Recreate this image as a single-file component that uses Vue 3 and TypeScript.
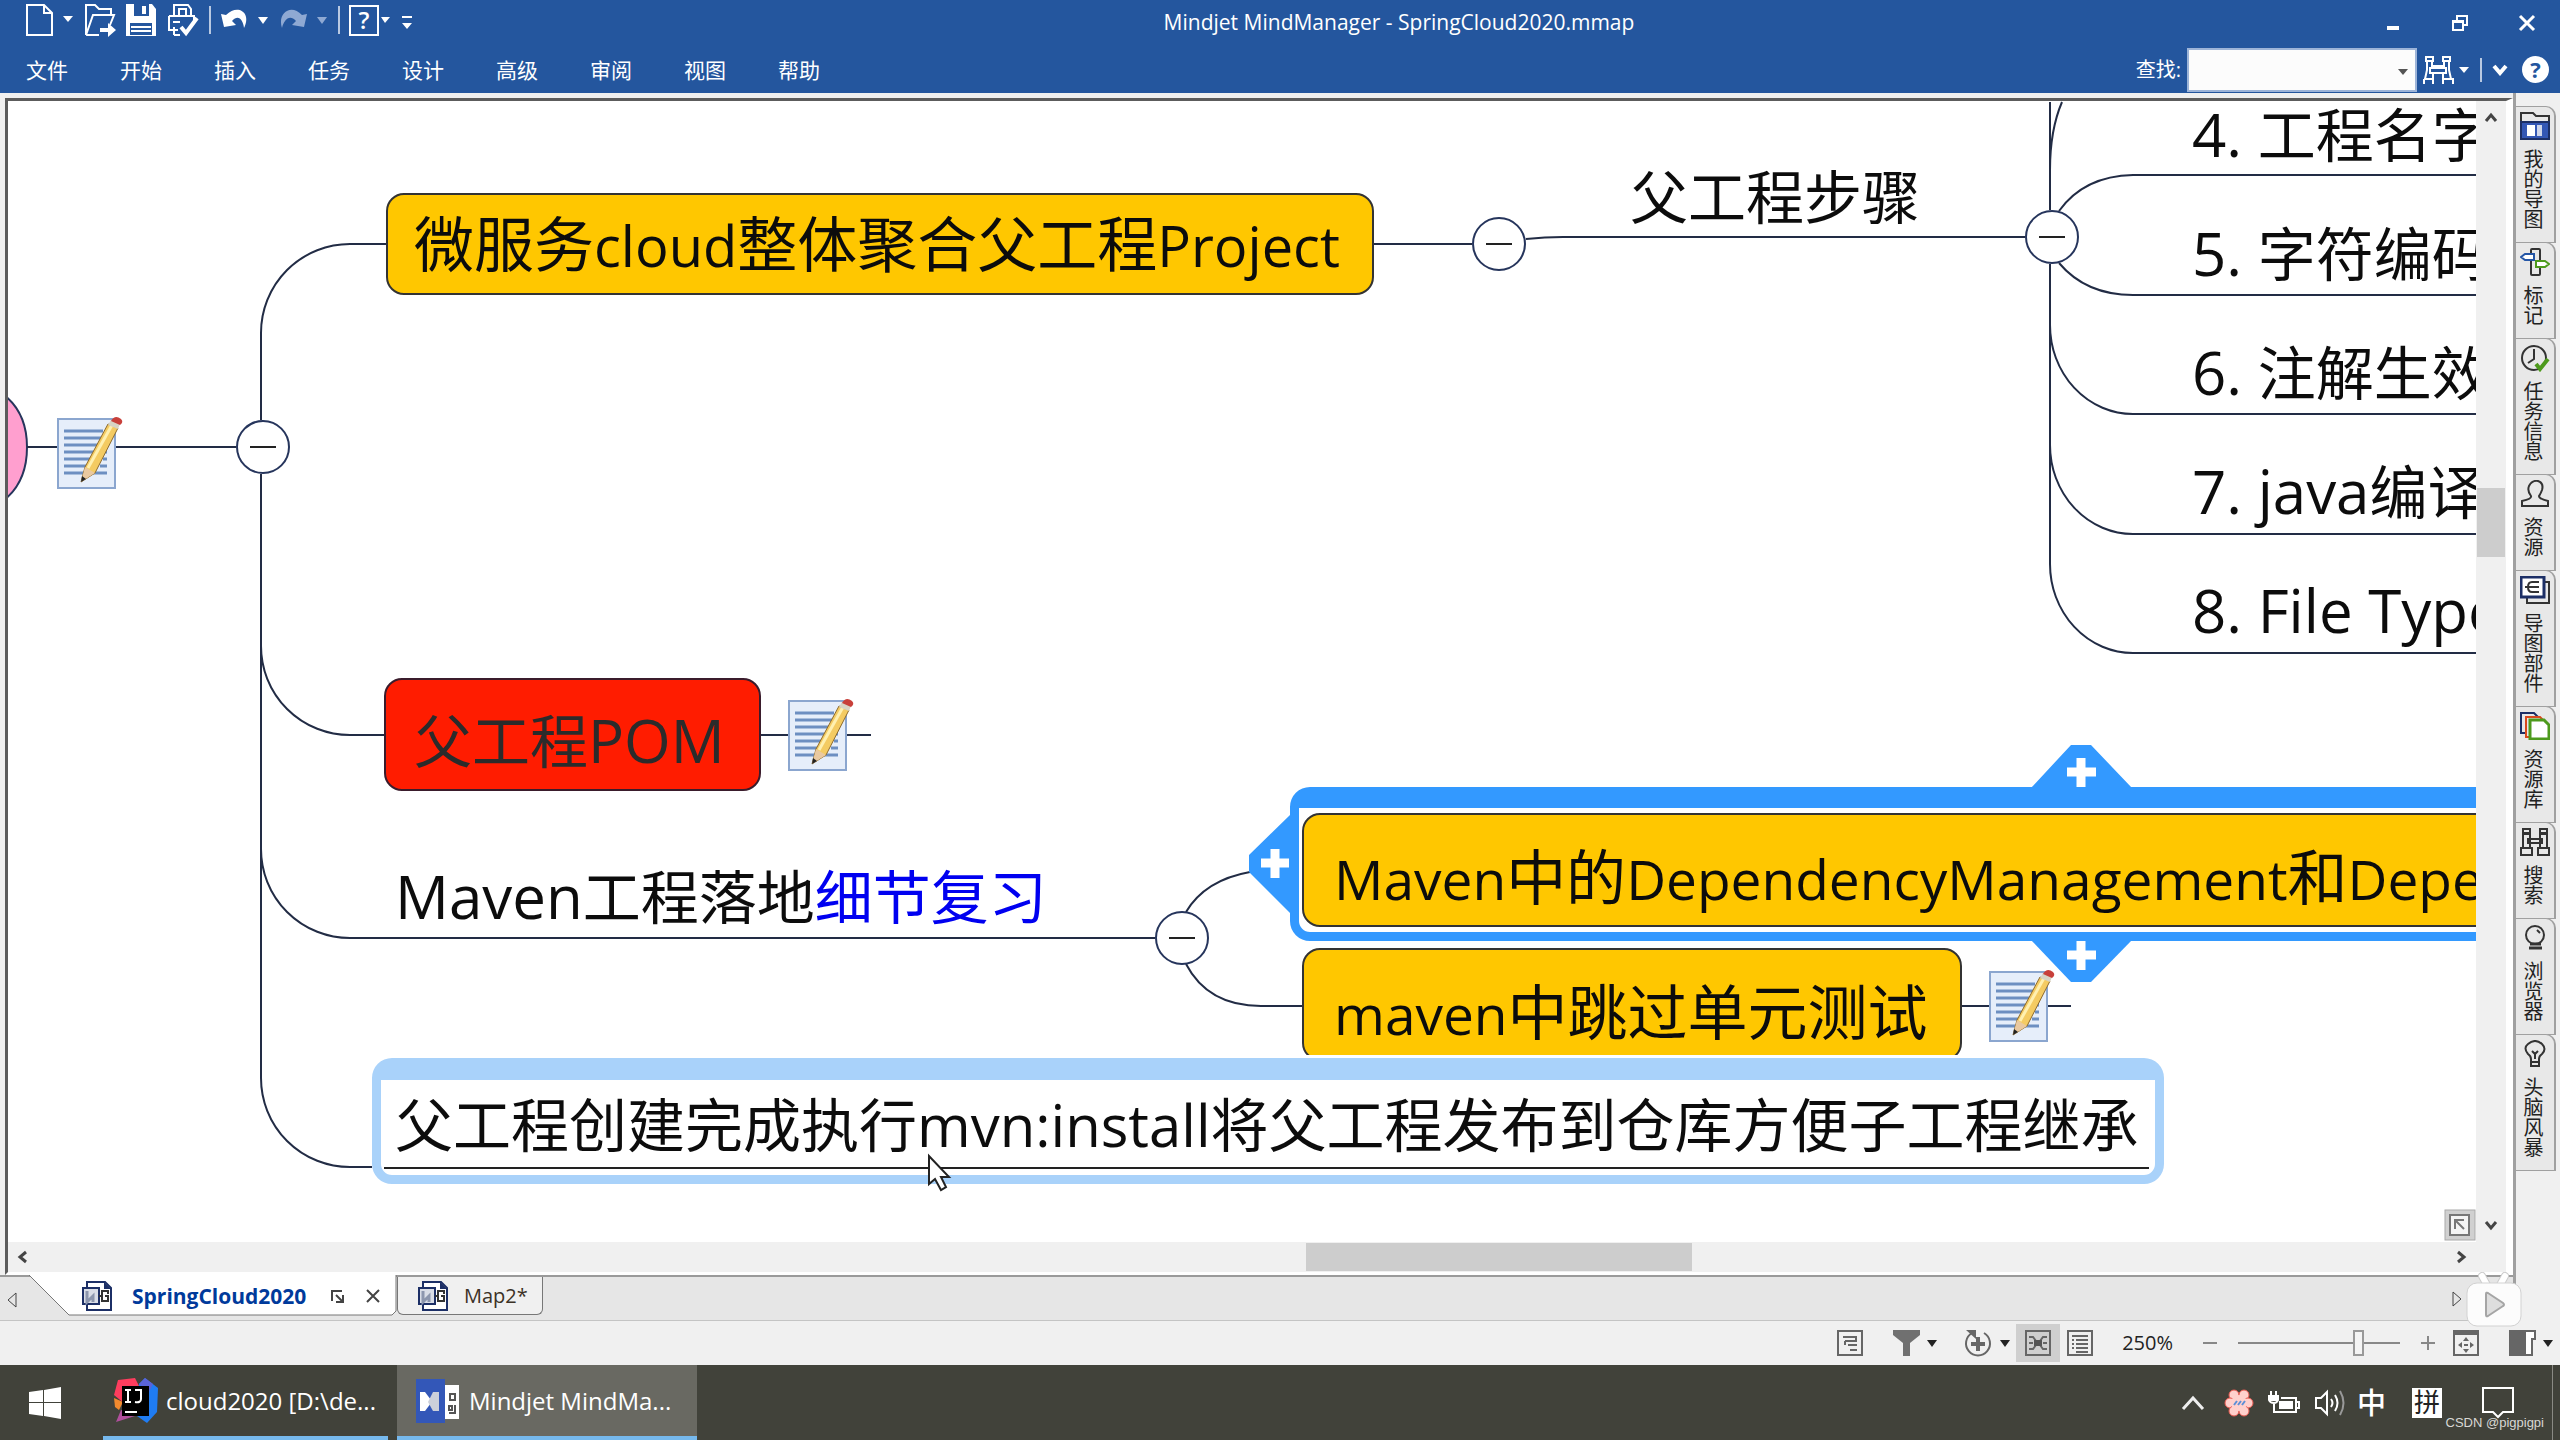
<script setup lang="ts">
import { ref } from 'vue'

interface Run { text: string; kind: 'cjk' | 'latin' | 'mark' }
interface Topic { id: string; tone: string; x: number; y: number; w?: number; h?: number; runs: Run[] }

const menus: string[] = ['文件', '开始', '插入', '任务', '设计', '高级', '审阅', '视图', '帮助']

const sideTabs: { name: string; icon: string }[] = [
  { name: '我的导图', icon: 'maps' },
  { name: '标记', icon: 'marker' },
  { name: '任务信息', icon: 'task' },
  { name: '资源', icon: 'person' },
  { name: '导图部件', icon: 'parts' },
  { name: '资源库', icon: 'library' },
  { name: '搜索', icon: 'search' },
  { name: '浏览器', icon: 'browser' },
  { name: '头脑风暴', icon: 'bulb' },
]

const c = (text: string): Run => ({ text, kind: 'cjk' })
const l = (text: string): Run => ({ text, kind: 'latin' })

const topics: Topic[] = [
  { id: 'project', tone: 'gold', x: 386, y: 193, w: 988, h: 102, runs: [c('微服务'), l('cloud'), c('整体聚合父工程'), l('Project')] },
  { id: 'pom', tone: 'red', x: 384, y: 678, w: 377, h: 113, runs: [c('父工程'), l('POM')] },
  { id: 'detail', tone: 'plain', x: 395, y: 856, runs: [l('Maven'), c('工程落地'), { text: '细节复习', kind: 'mark' }] },
  { id: 'depend', tone: 'gold', x: 1302, y: 813, w: 1400, h: 114, runs: [l('Maven'), c('中的'), l('DependencyManagement'), c('和'), l('Depen')] },
  { id: 'skip', tone: 'gold', x: 1302, y: 948, w: 660, h: 113, runs: [l('maven'), c('中跳过单元测试')] },
  { id: 'steps', tone: 'plain', x: 1630, y: 157, runs: [c('父工程步骤')] },
  { id: 's4', tone: 'plain', x: 2192, y: 94, runs: [l('4. '), c('工程名字')] },
  { id: 's5', tone: 'plain', x: 2192, y: 213, runs: [l('5. '), c('字符编码')] },
  { id: 's6', tone: 'plain', x: 2192, y: 332, runs: [l('6. '), c('注解生效')] },
  { id: 's7', tone: 'plain', x: 2192, y: 451, runs: [l('7. java'), c('编译')] },
  { id: 's8', tone: 'plain', x: 2192, y: 570, runs: [l('8. File Type')] },
]

const links: string[] = [
  'M27 447H236', 'M261 420V333A89 89 0 0 1 350 244H387',
  'M261 474V646A89 89 0 0 0 350 735H385', 'M261 474V849A89 89 0 0 0 350 938H1155',
  'M261 474V1078A89 89 0 0 0 350 1167H372',
  'M761 735H871', 'M1373 244H1472', 'M1526 239Q1545 237 1563 237H2025',
  'M1186 912Q1205 880 1250 872', 'M1186 964Q1208 1006 1261 1006H1303', 'M1961 1006H2071',
  'M2050 102V210', 'M2050 170Q2050 130 2062 102',
  'M2059 211Q2084 176 2133 175H2480', 'M2059 263Q2086 295 2133 295H2480',
  'M2050 264V325A83 89 0 0 0 2133 414H2480', 'M2050 264V445A83 89 0 0 0 2133 534H2480',
  'M2050 264V564A83 89 0 0 0 2133 653H2480',
]

const toggles = [
  { x: 263, y: 447 }, { x: 1499, y: 244 }, { x: 2052, y: 237 }, { x: 1182, y: 938 },
]
const notes = [{ x: 57, y: 416 }, { x: 788, y: 698 }, { x: 1989, y: 969 }]

const query = ref('')
const zoom = ref(76)
</script>

<template>
  <div class="app">
    <header class="ribbon">
      <div class="title-row">
        <div class="quick">
          <button class="q" aria-label="新建"><svg width="50" height="34" viewBox="0 0 50 34"><path d="M2 2H19L27 10V32H2Z M19 2V10H27" class="w" /><path d="M38 13h10l-5 6z" class="wf" /></svg></button>
          <button class="q" aria-label="打开"><svg width="32" height="34" viewBox="0 0 32 34"><path d="M2 32V2H11L15 6H27V12 M2 32L9 12H30L26 22 M2 32H15" class="w" /><path d="M16 25h8v-5l8 7-8 7v-5h-8z" class="wf" /></svg></button>
          <button class="q" aria-label="保存"><svg width="32" height="34" viewBox="0 0 32 34"><path d="M1 1H27L31 6V33H1Z" class="wf" /><path d="M9 1h15v12h-15z M5 20h22v12h-22z" fill="#24569e" /><path d="M17 3h4v8h-4z" class="wf" /><path d="M6 24H26M6 28H26" class="w" /></svg></button>
          <button class="q" aria-label="打印"><svg width="34" height="34" viewBox="0 0 34 34"><path d="M8 12V2H22L25 6V12 M13 12V6H20V12 M3 13H28V18 M3 13V27H12 M7 19H14 M8 32H14 M8 24V32" class="w" /><path d="M15 24l5 6 11-15" class="w thick" /></svg></button>
          <span class="sep"></span>
          <button class="q" aria-label="撤销"><svg width="50" height="34" viewBox="0 0 50 34"><path d="M1 11L4 24L16 22L12 18C18 11 23 16 24 25C32 10 18 0 6 12Z" class="wf" /><path d="M38 14h10l-5 7z" class="wf" /></svg></button>
          <button class="q" aria-label="重做"><svg width="50" height="34" viewBox="0 0 50 34"><path d="M28 11L25 24L13 22L17 18C11 11 5 16 3 25C-2 10 12 0 23 12Z" class="df" /><path d="M38 14h10l-5 7z" class="df" /></svg></button>
          <span class="sep"></span>
          <button class="q help-box" aria-label="帮助主题"><span>?</span></button>
          <svg class="more" width="34" height="34" viewBox="0 0 34 34"><path d="M1 14h9l-5 6z M22 20h10l-5 6z" class="wf" /><path d="M22 14H32" class="w" /></svg>
        </div>
        <h1>Mindjet MindManager - SpringCloud2020.mmap</h1>
        <div class="window-buttons">
          <button aria-label="最小化"><svg width="18" height="18" viewBox="0 0 18 18"><path d="M3 12h12v4h-12z" class="wf" /></svg></button>
          <button aria-label="还原"><svg width="18" height="18" viewBox="0 0 18 18"><path d="M2 7H12V16H2Z M6 6V2H16V11H13 M2 8H12" class="w" /></svg></button>
          <button aria-label="关闭"><svg width="18" height="18" viewBox="0 0 18 18"><path d="M2 2L16 16M16 2L2 16" class="w mid" /></svg></button>
        </div>
      </div>
      <div class="menu-row">
        <nav><button v-for="m in menus" :key="m">{{ m }}</button></nav>
        <div class="finder">
          <label for="find">查找:</label>
          <span class="find-box">
            <input id="find" v-model="query" type="text" />
            <svg width="12" height="8" viewBox="0 0 12 8"><path d="M1 1h10l-5 6z" fill="#555" /></svg>
          </span>
          <button aria-label="搜索"><svg width="46" height="30" viewBox="0 0 46 30"><path d="M3 2H10V6H3Z M20 2H27V6H20Z M4 6V15L2 24H4 M9 6V11H21V6 M26 6V15L28 24 M1 24H10V29 M1 29V24 M20 29V24H30V29 M7 13H23V18H7Z M10 18V24 M20 18V24" class="w" /><path d="M36 12h10l-5 6z" class="wf" /></svg></button>
          <span class="sep"></span>
          <button aria-label="折叠功能区"><svg width="16" height="12" viewBox="0 0 16 12"><path d="M2 2L8 9L14 2" class="w thick" /></svg></button>
          <button class="help-round" aria-label="帮助">?</button>
        </div>
      </div>
    </header>

    <div class="body">
      <div class="workspace">
        <div class="frame">
          <main class="canvas">
            <div class="board">
              <svg class="wires" width="2600" height="1300" viewBox="0 0 2600 1300">
                <path d="M0 392Q27 410 27 447Q27 485 0 503Z" fill="#ff9fcf" stroke="#26355c" stroke-width="2" />
                <path v-for="d in links" :key="d" :d="d" class="wire" />
                <g v-for="t in toggles" :key="t.x">
                  <circle :cx="t.x" :cy="t.y" r="26" class="toggle" />
                  <path :d="`M${t.x - 13} ${t.y}h26`" stroke="#222" stroke-width="2" />
                </g>
                <path d="M1290 815L1249 855V872L1290 913Z M2031 788L2071 745H2091L2132 788Z" fill="#3399ff" />
              </svg>

              <div class="selection"></div>
              <div
                v-for="t in topics" :key="t.id" class="topic" :class="[t.tone, t.id]"
                :style="{ left: t.x + 'px', top: t.y + 'px', width: t.w ? t.w + 'px' : undefined, height: t.h ? t.h + 'px' : undefined }"
              >
                <span v-for="(r, i) in t.runs" :key="i" :class="r.kind">{{ r.text }}</span>
              </div>
              <div class="topic install"><span>父工程创建完成执行</span><span>mvn:install</span><span>将父工程发布到仓库方便子工程继承</span></div>

              <svg class="wires" width="2600" height="1300" viewBox="0 0 2600 1300">
                <path d="M2031 940L2071 982H2091L2132 940Z" fill="#3399ff" />
                <path d="M2067 772h29M2081 758v29M2067 955h29M2081 941v29M1261 863h28M1275 849v29" stroke="#fff" stroke-width="9" />
                <g v-for="n in notes" :key="n.x" :transform="`translate(${n.x} ${n.y})`">
                  <rect x="1" y="3" width="57" height="69" fill="#e6eefa" stroke="#8ba6cf" stroke-width="2" />
                  <path d="M7 15H46M7 22H44M7 29H42M7 36H40M7 43H37M7 50H35M7 57H50M43 50H50M46 43H50M46 36H50" stroke="#6d8fc1" stroke-width="3" />
                  <path d="M24 66L28 51L51 8L61 12L38 57Z" fill="#f4cb62" stroke="#8d6a2c" stroke-width="1" />
                  <path d="M31 52L55 9" stroke="#fff0b0" stroke-width="3" />
                  <path d="M24 66L28 51L38 57Z" fill="#eac9a0" /><path d="M24 66L25 60L29 63Z" fill="#222" />
                  <path d="M51 9L54 4L63 8L61 13Z" fill="#d8d4c4" />
                  <path d="M54 5Q58 -2 64 3Q67 6 63 9Z" fill="#c8403a" />
                </g>
                <path d="M929 1156V1184L935 1179L941 1190L946 1187L941 1177H949Z" fill="#fff" stroke="#222" stroke-width="2" />
              </svg>
            </div>
            <button class="overview" aria-label="概览"><svg width="32" height="32" viewBox="0 0 32 32"><rect x="1" y="1" width="30" height="30" fill="#d0d0d0" stroke="#aaa" /><rect x="6" y="6" width="19" height="20" fill="#f4f4f4" stroke="#777" stroke-width="2" /><path d="M11 20V11H20M11 11L20 20" fill="none" stroke="#777" stroke-width="2" /></svg></button>
          </main>
          <div class="vscroll">
            <svg width="14" height="12" viewBox="0 0 14 12"><path d="M2 9L7 3L12 9" class="k" /></svg>
            <span class="vthumb"></span>
            <svg width="14" height="12" viewBox="0 0 14 12"><path d="M2 3L7 9L12 3" class="k" /></svg>
          </div>
          <div class="hscroll">
            <svg width="12" height="14" viewBox="0 0 12 14"><path d="M9 2L3 7L9 12" class="k" /></svg>
            <span class="hthumb"></span>
            <svg width="12" height="14" viewBox="0 0 12 14"><path d="M3 2L9 7L3 12" class="k" /></svg>
          </div>
        </div>

        <div class="doc-tabs">
          <svg class="first" width="12" height="18" viewBox="0 0 12 18"><path d="M10 2V16L2 9Z" fill="none" stroke="#444" stroke-width="1" /></svg>
          <div class="doc active">
            <svg class="shape" width="369" height="42" viewBox="0 0 369 42"><path d="M0 0L40 40H363L367 36V0" fill="#fff" stroke="#777" stroke-width="1" /></svg>
            <svg class="doc-icon" width="31" height="32" viewBox="0 0 31 32"><path d="M5 2H23L29 8V30H5Z" fill="#fff" stroke="#1c2f66" stroke-width="2" /><path d="M22 2L29 9H22Z" fill="#1c2f66" /><rect x="1" y="8" width="16" height="16" fill="#d9dde6" stroke="#1c2f66" stroke-width="2" /><path d="M5 11V22L11 16V22" stroke="#8c96ad" stroke-width="3" fill="none" /><path d="M26 14V11H20V21H26V16H23 M17 16H20" stroke="#333" stroke-width="2" fill="none" /></svg>
            <button class="doc-name">SpringCloud2020</button>
            <button aria-label="浮动"><svg width="16" height="14" viewBox="0 0 16 14"><path d="M2 12V2H12M6 6L12 12M13 6V13H6" fill="none" stroke="#444" stroke-width="2" /></svg></button>
            <button class="close" aria-label="关闭文档"><svg width="16" height="16" viewBox="0 0 16 16"><path d="M2 2L14 14M14 2L2 14" fill="none" stroke="#444" stroke-width="2" /></svg></button>
          </div>
          <div class="doc idle">
            <svg class="doc-icon" width="31" height="32" viewBox="0 0 31 32"><path d="M5 2H23L29 8V30H5Z" fill="#fff" stroke="#1c2f66" stroke-width="2" /><path d="M22 2L29 9H22Z" fill="#1c2f66" /><rect x="1" y="8" width="16" height="16" fill="#d9dde6" stroke="#1c2f66" stroke-width="2" /><path d="M5 11V22L11 16V22" stroke="#8c96ad" stroke-width="3" fill="none" /><path d="M26 14V11H20V21H26V16H23 M17 16H20" stroke="#333" stroke-width="2" fill="none" /></svg>
            <button class="doc-name">Map2*</button>
          </div>
          <svg class="last" width="12" height="18" viewBox="0 0 12 18"><path d="M2 2V16L10 9Z" fill="none" stroke="#444" stroke-width="1" /></svg>
          <svg class="badge" width="60" height="56" viewBox="0 0 60 56"><path d="M18 4L23 13M41 4L36 13" stroke="#ccc" stroke-width="8" stroke-linecap="round" /><path d="M18 4L23 13M41 4L36 13" stroke="#fff" stroke-width="6" stroke-linecap="round" /><rect x="3" y="11" width="54" height="43" rx="10" fill="#fcfcfc" stroke="#d2d2d2" stroke-width="1" /><path d="M22 22Q22 20 24 21L39 31Q41 33 39 34L24 44Q22 45 22 43Z" fill="#dedede" stroke="#a5a5a5" stroke-width="2" /></svg>
        </div>
      </div>

      <aside class="side">
        <button v-for="s in sideTabs" :key="s.name" class="side-tab">
          <svg width="30" height="28" viewBox="0 0 30 28" class="si">
            <template v-if="s.icon === 'maps'"><path d="M1 12V1H13L16 4H29V12" /><path d="M1 10H29V27H1Z" fill="#3357b5" stroke="#1c2f66" /><path d="M7 13h8v11h-8z" fill="#fff" stroke="none" /><path d="M17 13h5v11h-5z" fill="#cfd6ea" stroke="none" /></template>
            <template v-else-if="s.icon === 'marker'"><rect x="11" y="1" width="9" height="26" rx="1" /><path d="M1 9L5 6H14V12H5Z" stroke="#2456a6" fill="#fff" /><path d="M29 16L25 13H16V19H25Z" stroke="#4d9a1c" fill="#fff" /></template>
            <template v-else-if="s.icon === 'task'"><circle cx="14" cy="14" r="12" /><path d="M14 5V15L8 19" /><path d="M16 20L20 25L28 15" stroke="#4d9a1c" stroke-width="4" /></template>
            <template v-else-if="s.icon === 'person'"><path d="M11 16Q7 11 9 6Q12 0 18 1Q24 3 22 10Q21 13 19 16Q19 19 28 21V26H2V21Q12 19 11 16Z" /></template>
            <template v-else-if="s.icon === 'parts'"><path d="M24 6H29V27H7V22" /><path d="M1 1H24V21H1Z" fill="#fff" stroke="#1c2f66" stroke-width="3" /><path d="M12 6H19M5 11H19M12 16H19M12 6Q8 6 8 11Q8 16 12 16" /></template>
            <template v-else-if="s.icon === 'library'"><path d="M5 21H1V1H14L18 5" stroke="#1c2f66" /><path d="M10 25H6V5H20L23 8" stroke="#d9481c" /><path d="M10 8H24L29 13V27H10Z" stroke="#4d9a1c" fill="#fff" stroke-width="3" /></template>
            <template v-else-if="s.icon === 'search'"><path d="M3 1H10V5H3Z M20 1H27V5H20Z M3 6H10V20H3Z M20 6H27V20H20Z M1 20H12V27H1Z M18 20H29V27H18Z M8 11H22V15H8Z" /></template>
            <template v-else-if="s.icon === 'browser'"><circle cx="15" cy="11" r="9" /><path d="M10 20H21M9 24H22" stroke-width="3" /><path d="M17 6L20 9" /></template>
            <template v-else><path d="M11 19Q11 16 8 14Q3 8 8 4Q15 -2 22 4Q27 9 22 14Q19 16 19 19V26H11Z M11 22H19 M12 11L15 14L18 11 M15 14V19" /></template>
          </svg>
          <span>{{ s.name }}</span>
        </button>
      </aside>
    </div>

    <div class="status">
      <button aria-label="大纲"><svg width="28" height="28" viewBox="0 0 28 28" class="st"><path d="M2 2H26V26H2Z M7 8H20V12H9 M12 16H21 M14 21H21 M9 12V16" /></svg></button>
      <button class="filter" aria-label="筛选"><svg width="46" height="28" viewBox="0 0 46 28"><path d="M1 1H28V6L18 14V27H11V14L1 6Z" fill="#707070" /><path d="M35 11h10l-5 7z" fill="#222" /></svg></button>
      <button class="rotate" aria-label="展开"><svg width="48" height="30" viewBox="0 0 48 30" class="st"><path d="M9 5A12 12 0 1 0 21 5" /><path d="M3 2H13V11Z" fill="#666" stroke="none" /><path d="M15 9V23M8 16H22" stroke-width="4" /><path d="M37 12h10l-5 7z" fill="#222" stroke="none" /></svg></button>
      <button class="on" aria-label="导图视图"><svg width="28" height="28" viewBox="0 0 28 28" class="st"><path d="M2 2H26V26H2Z M5 8H9L12 12 M23 8H19L16 12 M5 20H9L12 16 M23 20H19L16 16 M5 14H9 M19 14H23" /><path d="M10 11h8v6h-8z" fill="#555" stroke="none" /></svg></button>
      <button class="list" aria-label="大纲视图"><svg width="28" height="28" viewBox="0 0 28 28" class="st"><path d="M2 2H26V26H2Z M6 7H22 M10 11H22 M10 15H22 M10 19H22 M10 23H22 M6 11H8 M6 15H8 M6 19H8" /></svg></button>
      <label class="percent" for="zoom">250%</label>
      <button class="minus" aria-label="缩小"><svg width="16" height="16" viewBox="0 0 16 16"><path d="M1 8H15" stroke="#888" stroke-width="2" /></svg></button>
      <input id="zoom" v-model.number="zoom" type="range" min="0" max="100" />
      <button class="plus" aria-label="放大"><svg width="16" height="16" viewBox="0 0 16 16"><path d="M1 8H15M8 1V15" stroke="#888" stroke-width="2" /></svg></button>
      <button class="fit" aria-label="适合"><svg width="28" height="28" viewBox="0 0 28 28" class="st"><path d="M2 2H26V26H2Z" /><path d="M2 4H26" stroke-width="4" /><path d="M14 8L17 12H11Z M14 24L17 20H11Z M6 16L10 13V19Z M22 16L18 13V19Z" fill="#666" stroke="none" /><path d="M12 16H16" /></svg></button>
      <button class="pane" aria-label="任务窗格"><svg width="44" height="28" viewBox="0 0 44 28"><path d="M1 2H26V10H23V26H1Z" fill="#fff" stroke="#666" stroke-width="2" /><path d="M1 2h16v24h-16z" fill="#666" /><path d="M34 11h10l-5 7z" fill="#222" /></svg></button>
    </div>

    <footer class="taskbar">
      <button class="start" aria-label="开始菜单"><svg width="32" height="32" viewBox="0 0 32 32"><path d="M0 5L14 3V15H0Z M15 3L32 0V15H15Z M0 16H14V29L0 27Z M15 16H32V32L15 29Z" fill="#fff" /></svg></button>
      <button class="task idea">
        <svg width="46" height="46" viewBox="0 0 46 46"><path d="M5 2L22 0L26 8L12 26L1 17Z" fill="#fe3d5e" /><path d="M1 20L10 24L6 32L2 29Z" fill="#f28a2e" /><path d="M26 6L32 0L45 10L44 34L34 45L24 38Z" fill="#1f7cf2" /><path d="M3 44L8 32L22 38Z" fill="#b04f9c" /><path d="M26 6L32 0L40 6L36 14Z" fill="#5a63d8" /><rect x="9" y="8" width="27" height="30" fill="#000" /><path d="M12 12H18M15 12V24M12 24H18M22 12H28V21Q28 25 22 24M12 34H24" fill="none" stroke="#fff" stroke-width="2" /></svg>
        <span>cloud2020 [D:\de...</span>
      </button>
      <button class="task mind">
        <svg width="44" height="44" viewBox="0 0 44 44"><rect width="29" height="44" fill="#3357b8" /><path d="M4 13H9L15 21V24L9 32H4Z" fill="#fff" /><path d="M23 13V32H17L12 23L17 13Z" fill="#ccd0da" /><rect x="29" y="6" width="14" height="34" fill="#fff" /><path d="M34 15H39V21H34Z M33 27H36V31H33Z M39 26V34H33" fill="none" stroke="#555" stroke-width="2" /></svg>
        <span>Mindjet MindMa...</span>
      </button>
      <div class="tray">
        <svg class="chevron" width="24" height="16" viewBox="0 0 24 16"><path d="M2 14L12 3L22 14" fill="none" stroke="#eee" stroke-width="3" /></svg>
        <svg width="30" height="30" viewBox="0 0 30 30"><g fill="#ffd0cc" stroke="#e8584f" stroke-width="1"><circle cx="10" cy="7" r="5" /><circle cx="20" cy="7" r="5" /><circle cx="6" cy="15" r="5" /><circle cx="24" cy="15" r="5" /><circle cx="10" cy="23" r="5" /><circle cx="20" cy="23" r="5" /></g><circle cx="15" cy="15" r="8" fill="#ffd0cc" /><path d="M10 17L13 13M14 17L17 13M18 17L21 13" stroke="#5c8fd6" stroke-width="2" /></svg>
        <svg width="32" height="26" viewBox="0 0 32 26"><path d="M3 1V6M8 1V6M1 6H10V10Q9 13 6 13Q2 13 1 10Z M6 13V22H28V8H13 M28 12H31V18H28" fill="none" stroke="#fff" stroke-width="2" /><path d="M11 11h14v8h-14z M2 6h7v5h-7z" fill="#fff" /></svg>
        <svg width="32" height="28" viewBox="0 0 32 28"><path d="M2 9H7L13 3V25L7 19H2Z M17 10Q20 14 17 18 M21 6Q26 14 21 22" fill="none" stroke="#fff" stroke-width="2" /><path d="M26 2Q33 14 26 26" fill="none" stroke="#999" stroke-width="2" /></svg>
        <span class="ime">中</span>
        <span class="pin">拼</span>
        <svg class="notify" width="34" height="34" viewBox="0 0 34 34"><path d="M2 2H32V26H22L17 31L12 26H2Z" fill="none" stroke="#fff" stroke-width="2" /></svg>
      </div>
      <span class="peek"></span>
      <span class="credit">CSDN @pigpigpi</span>
    </footer>
  </div>
</template>

<style>
body {
  margin: 0;
}
</style>

<style scoped>
.app {
  display: flex;
  flex-direction: column;
  height: 100vh;
  overflow: hidden;
  background: #f0f0f0;
  font-family: "Open Sans", "Noto Sans CJK SC", sans-serif;
  font-size: 20px;
  line-height: 28px;
}
button {
  padding: 0;
  border: 0;
  background: none;
  color: inherit;
  font: inherit;
}
svg {
  display: block;
  flex: none;
}
.w { fill: none; stroke: #fff; stroke-width: 2; }
.mid { stroke-width: 3; }
.thick { stroke-width: 4; }
.wf { fill: #fff; }
.df { fill: #8fa9d3; }
.k { fill: none; stroke: #444; stroke-width: 3; }

.ribbon {
  flex: none;
  height: 93px;
  background: #24569e;
  color: #fff;
}
.title-row {
  display: flex;
  height: 46px;
}
.quick {
  display: flex;
  align-items: center;
  gap: 9px;
  height: 40px;
  padding-left: 25px;
}
.sep {
  width: 2px;
  height: 28px;
  background: #b9c9e2;
}
.help-box {
  width: 30px;
  height: 31px;
  border: 2px solid #fff;
  box-sizing: border-box;
  font-size: 24px;
  font-weight: 600;
  line-height: 26px;
}
.more { margin-left: -8px; }
.title-row h1 {
  flex: 1;
  margin: 0;
  font-size: 21px;
  font-weight: 400;
  line-height: 44px;
  text-align: center;
}
.window-buttons {
  display: flex;
  align-items: center;
  gap: 49px;
  padding-right: 24px;
}
.menu-row {
  display: flex;
  justify-content: space-between;
  height: 47px;
}
nav {
  display: flex;
  gap: 52px;
  padding-left: 26px;
}
nav button {
  width: 42px;
  height: 47px;
  font-size: 21px;
  white-space: nowrap;
}
.finder {
  display: flex;
  align-items: center;
  gap: 6px;
  padding-right: 11px;
}
.finder .sep { height: 24px; margin: 0 4px 0 5px; }
.find-box {
  position: relative;
  width: 230px;
  height: 44px;
}
.find-box input {
  width: 100%;
  height: 100%;
  box-sizing: border-box;
  border: 2px solid #9db4d8;
  background: #fcfcfc;
  font: inherit;
}
.find-box svg {
  position: absolute;
  right: 8px;
  top: 20px;
}
.help-round {
  width: 27px;
  height: 27px;
  margin-left: 8px;
  border-radius: 50%;
  background: #fff;
  color: #24569e;
  font-size: 22px;
  font-weight: 700;
  line-height: 27px;
}

.body {
  display: flex;
  flex: 1;
  min-height: 0;
}
.workspace {
  display: flex;
  flex: 1;
  flex-direction: column;
  min-width: 0;
  border-right: 3px solid #a0a0a0;
}
.frame {
  display: grid;
  flex: 1;
  grid-template-columns: minmax(0, 1fr) 30px;
  grid-template-rows: minmax(0, 1fr) 30px;
  min-height: 0;
  margin: 5px 0 0 5px;
  border-top: 3px solid #5c5c5c;
  border-left: 3px solid #5c5c5c;
  border-right: 7px solid #fff;
  border-bottom: 3px solid #fff;
}
.canvas {
  position: relative;
  overflow: hidden;
  background: #fff;
}
.board {
  position: absolute;
  left: -8px;
  top: -101px;
  width: 2600px;
  height: 1300px;
}
.wires {
  position: absolute;
  left: 0;
  top: 0;
}
.wire {
  fill: none;
  stroke: #222c45;
  stroke-width: 2;
}
.toggle {
  fill: #fff;
  stroke: #26355c;
  stroke-width: 2;
}
.topic {
  position: absolute;
  display: flex;
  align-items: baseline;
  box-sizing: border-box;
  color: #0c0c0c;
  font-size: 58px;
  line-height: 80px;
  white-space: pre;
}
.latin { font-size: 60px; }
.mark { color: #0000f0; }
.gold {
  padding: 9px 26px 0;
  border: 2px solid #333;
  border-radius: 18px;
  background: #ffc700;
  font-size: 60px;
}
.gold .latin { font-size: 56px; }
.depend, .skip { padding: 22px 30px 0; }
.depend .latin, .skip .latin { font-size: 55px; }
.red {
  padding: 20px 28px 0;
  border: 2px solid #3a1c2c;
  border-radius: 18px;
  background: #ff1c00;
  color: #2b2b2b;
}
.selection {
  position: absolute;
  left: 1290px;
  top: 787px;
  width: 1400px;
  height: 154px;
  box-sizing: border-box;
  border: 9px solid #3399ff;
  border-top-width: 21px;
  border-radius: 20px;
  background: #fff;
}
.install {
  left: 372px;
  top: 1058px;
  width: 1792px;
  height: 126px;
  padding: 5px 0 0 14px;
  border: 9px solid #a9d2fa;
  border-top-width: 22px;
  border-radius: 20px;
  background: #fff;
  box-shadow: 0 -3px 0 #fff;
}
.install::after {
  position: absolute;
  right: 6px;
  bottom: 6px;
  left: 3px;
  height: 2px;
  background: #222;
  content: "";
}
.overview {
  position: absolute;
  right: 0;
  bottom: 1px;
}
.vscroll {
  display: grid;
  grid-template-rows: 34px 353fr 69px 650fr 34px;
  justify-items: center;
  align-items: center;
  background: #f0f0f0;
}
.vscroll svg:last-child { grid-row: 5; }
.vthumb {
  grid-row: 3;
  width: 28px;
  height: 69px;
  background: #cdcdcd;
}
.hscroll {
  display: grid;
  grid-column: 1 / 3;
  grid-template-columns: 30px 1268fr 386px 753fr 31px 30px;
  align-items: center;
  justify-items: center;
  background: #f0f0f0;
}
.hscroll svg:last-child { grid-column: 5; }
.hthumb {
  grid-column: 3;
  width: 386px;
  height: 28px;
  background: #cdcdcd;
}
.doc-tabs {
  position: relative;
  display: flex;
  flex: none;
  height: 43px;
  border-top: 2px solid #9a9a9a;
  border-bottom: 1px solid #c4c4c4;
  background: #e6e6e6;
}
.first { margin: 14px 11px 0 6px; }
.doc {
  position: relative;
  display: flex;
  align-items: center;
  height: 37px;
}
.active {
  width: 315px;
  padding-left: 53px;
  color: #003a9b;
  font-size: 21px;
  font-weight: 700;
}
.shape {
  position: absolute;
  left: 0;
  top: -2px;
}
.doc-icon, .doc button { position: relative; }
.doc-name { margin-left: 19px; }
.active .doc-name + button { margin-left: 24px; }
.close { margin-left: 19px; }
.idle {
  width: 124px;
  padding-left: 20px;
  border: 1px solid #777;
  border-top: 0;
  border-radius: 0 0 6px 6px;
  background: #f0f0f0;
  color: #3c3226;
}
.idle .doc-name { margin-left: 15px; }
.last {
  margin: 13px 50px 0 auto;
}
.badge {
  position: absolute;
  right: -11px;
  top: -5px;
  z-index: 2;
}

.side {
  display: flex;
  flex: none;
  flex-direction: column;
  width: 44px;
  box-sizing: border-box;
  padding: 13px 4px 0 0;
}
.side-tab {
  display: flex;
  flex-direction: column;
  align-items: center;
  flex: none;
  gap: 9px;
  box-sizing: border-box;
  padding: 5px 0 13px;
  border: 1px solid #a0a0a0;
  border-width: 1px 2px 1px 0;
  border-top-right-radius: 10px;
  background: #e8e8e8;
  color: #222;
  font-size: 20px;
  line-height: 22px;
}
.side-tab + .side-tab { margin-top: -1px; }
.side-tab span {
  margin-right: 6px;
  writing-mode: vertical-rl;
  text-orientation: upright;
}
.si { fill: none; stroke: #333; stroke-width: 2; }
.st { fill: none; stroke: #666; stroke-width: 2; }

.status {
  display: flex;
  flex: none;
  align-items: center;
  justify-content: flex-end;
  height: 44px;
  padding-right: 7px;
  color: #222;
}
.filter { margin-left: 28px; }
.rotate { margin-left: 25px; }
.on {
  display: flex;
  align-items: center;
  justify-content: center;
  width: 44px;
  height: 38px;
  margin-left: 5px;
  background: #cfcfcf;
}
.list { margin-left: 6px; }
.percent { margin-left: 28px; }
.minus { margin-left: 29px; }
#zoom {
  width: 162px;
  height: 28px;
  margin: 0 20px;
  background: linear-gradient(#888, #888) center / 100% 2px no-repeat;
  appearance: none;
}
#zoom::-webkit-slider-thumb {
  width: 11px;
  height: 26px;
  box-sizing: border-box;
  border: 2px solid #999;
  background: #f4f4f4;
  appearance: none;
}
.fit { margin-left: 16px; }
.pane { margin-left: 29px; }

.taskbar {
  position: relative;
  display: flex;
  flex: none;
  height: 75px;
  background: #41423a;
  color: #fff;
  font-size: 24px;
}
.start {
  width: 64px;
  margin: 0 39px 0 0;
  padding-left: 29px;
}
.task {
  display: flex;
  align-items: center;
  box-sizing: border-box;
  height: 75px;
  border-bottom: 4px solid #76b9ed;
  text-align: left;
  white-space: nowrap;
}
.idea {
  width: 285px;
  gap: 7px;
  padding-left: 10px;
}
.mind {
  width: 300px;
  gap: 9px;
  margin-left: 9px;
  padding-left: 19px;
  background: #696962;
}
.tray {
  display: flex;
  align-items: center;
  gap: 14px;
  margin-left: auto;
  padding-right: 45px;
}
.chevron { margin-right: 5px; }
.ime {
  margin-left: -3px;
  font-size: 29px;
  font-weight: 500;
}
.pin {
  width: 30px;
  height: 30px;
  margin-left: 12px;
  background: #fff;
  color: #222;
  font-size: 26px;
  line-height: 28px;
  text-align: center;
}
.notify { margin-left: 25px; }
.peek {
  position: absolute;
  top: 0;
  right: 7px;
  bottom: 0;
  width: 1px;
  background: #8a8a84;
}
.credit {
  position: absolute;
  right: 16px;
  bottom: 7px;
  color: #d8d8d4;
  font-family: "Liberation Sans", sans-serif;
  font-size: 13px;
  line-height: 20px;
}
</style>
